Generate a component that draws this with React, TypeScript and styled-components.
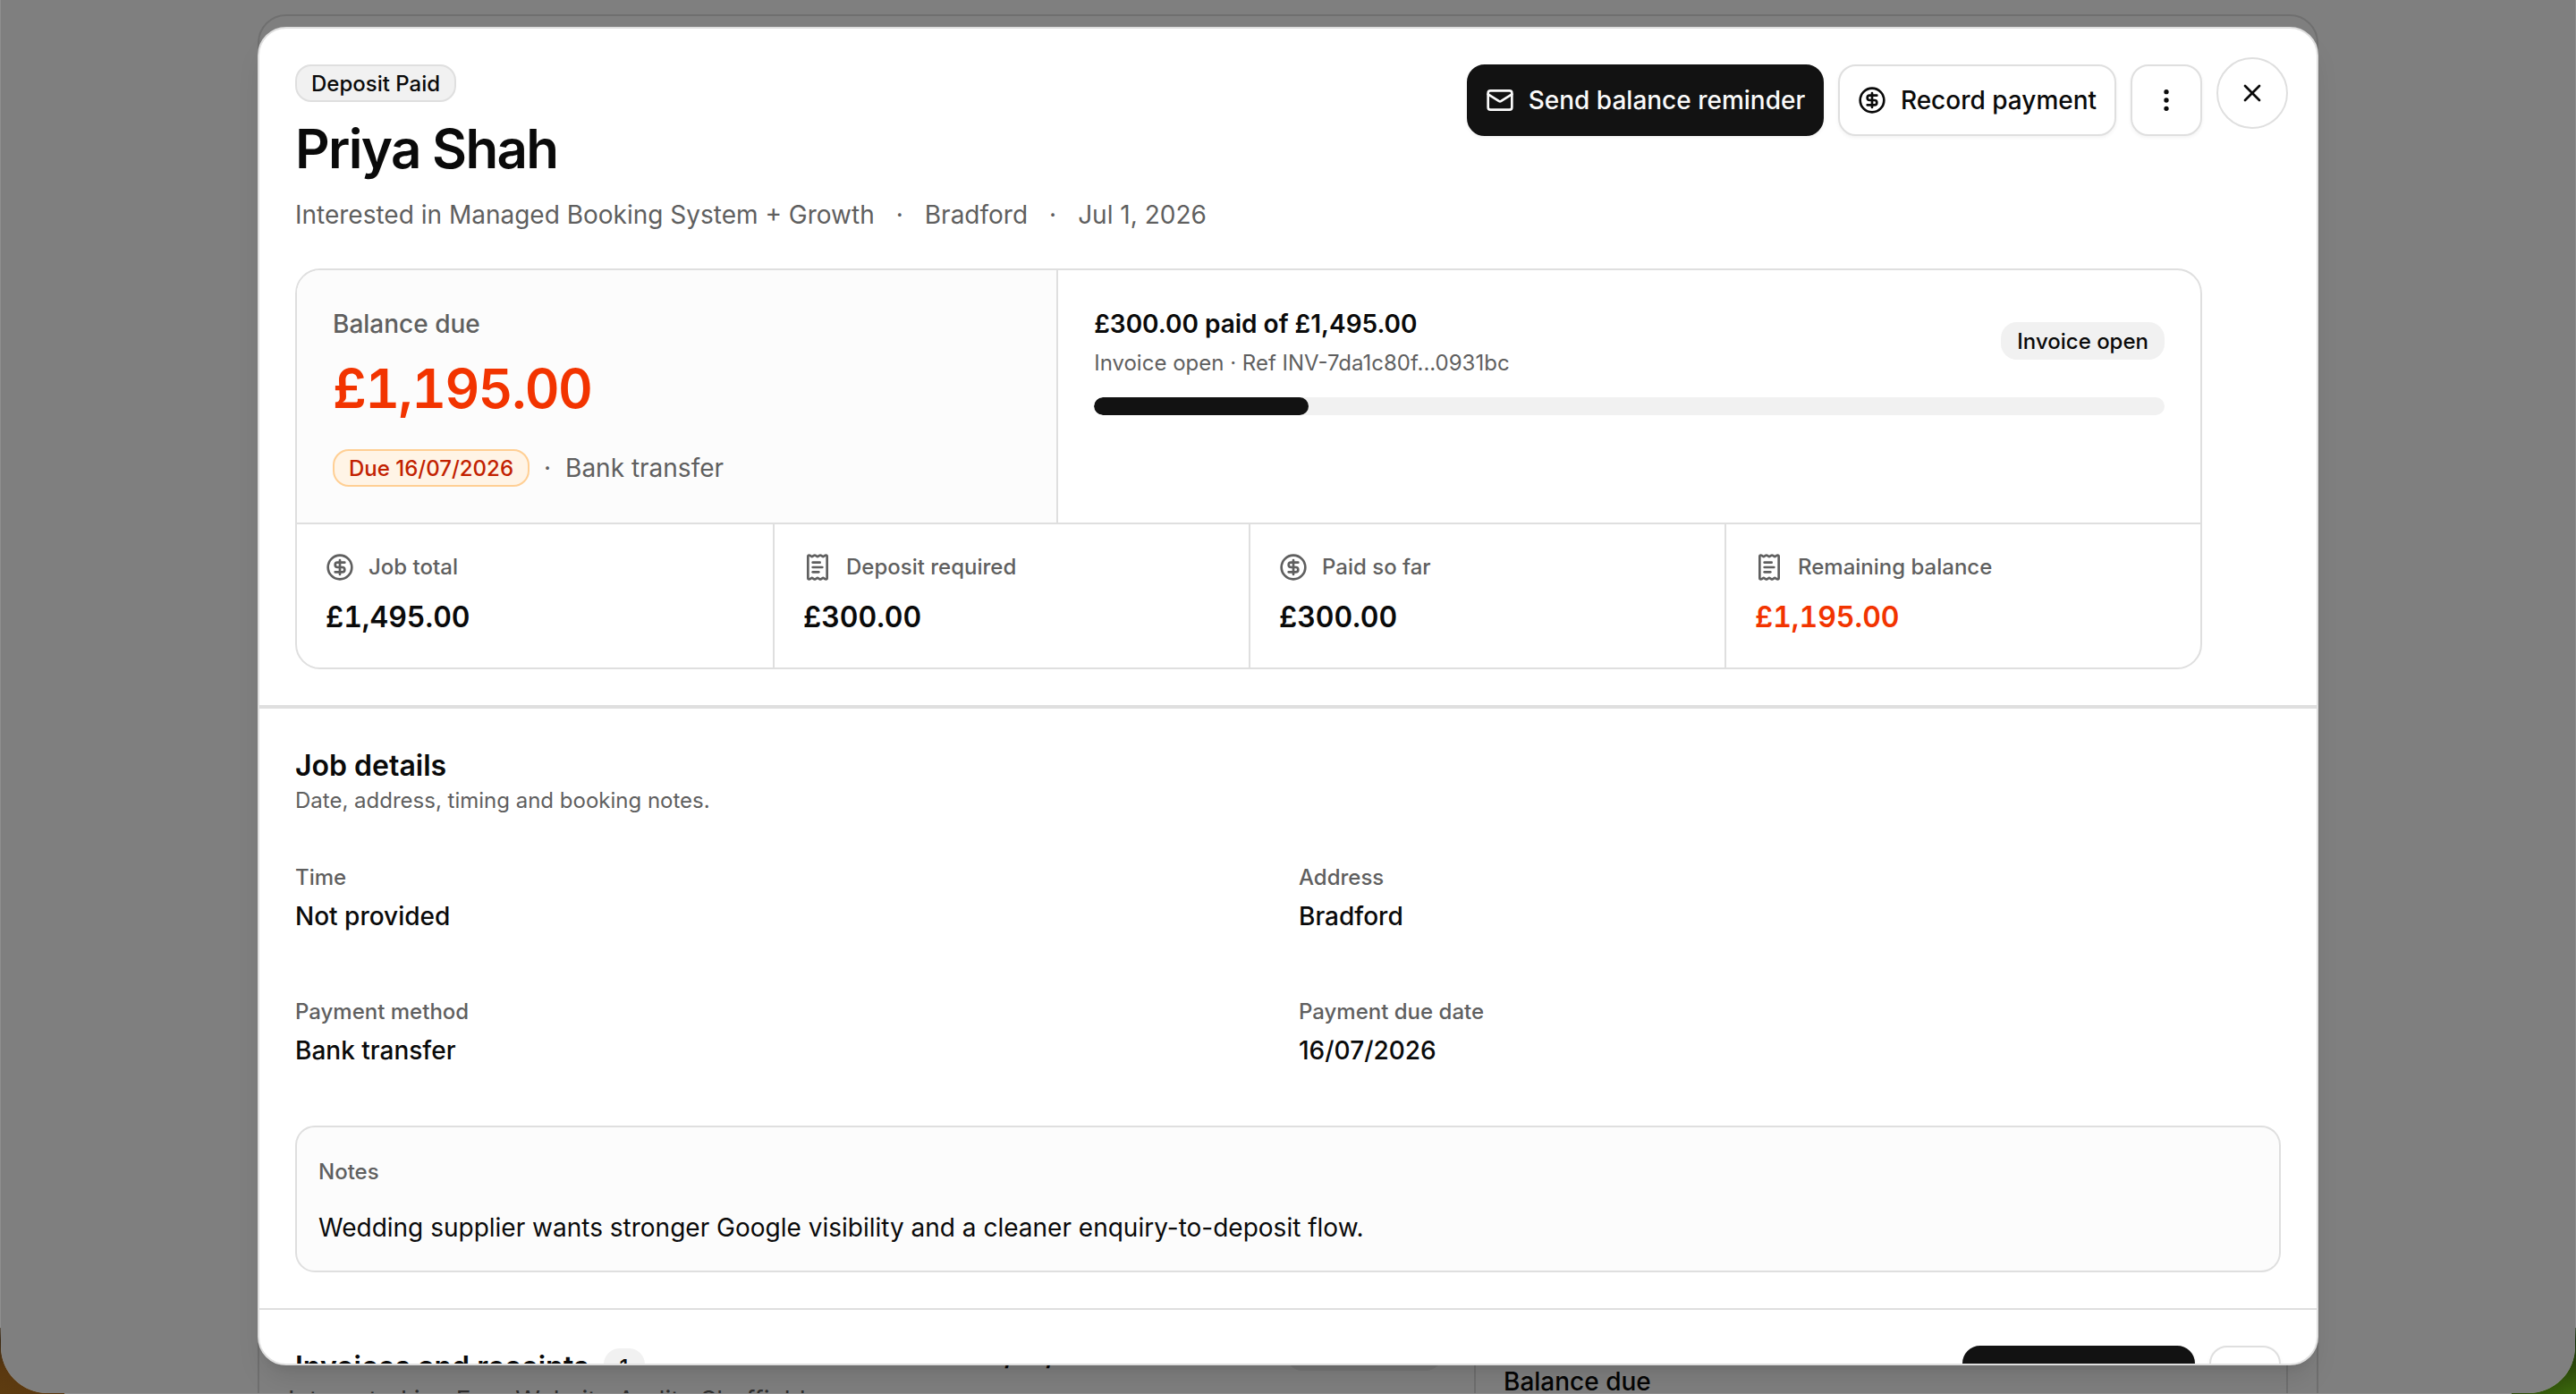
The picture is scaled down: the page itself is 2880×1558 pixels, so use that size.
import React from "react";
import styled, { createGlobalStyle } from "styled-components";
import { CircleDollarSign, EllipsisVertical, Mail, ReceiptText, X } from "lucide-react";

const line = "#dfdfdf";
const ink = "#0a0a0a";
const muted = "#5f5f5f";
const danger = "#f23400";

const GlobalStyle = createGlobalStyle`
  *, *::before, *::after { box-sizing: border-box; }
  html, body { margin: 0; padding: 0; overflow: hidden; }
  body {
    font-family: Inter, "Liberation Sans", sans-serif;
    color: ${ink};
    background: #808080;
  }
  p, h1, h2, h3 { margin: 0; font-weight: inherit; }
  button { font: inherit; color: inherit; margin: 0; }
`;

const Desktop = styled.div`
  position: relative;
  width: 2880px;
  height: 1558px;
  overflow: hidden;
  background:
    linear-gradient(20deg, #5e3c10 0, #5a3810 30%, #3c2a14 60%, #8e8e8e 90%) 0 100% / 72px 74px no-repeat,
    linear-gradient(-20deg, #3c6a0c 0, #2c4a0a 30%, #14300a 60%, #8e8e8e 90%) 100% 100% / 72px 74px no-repeat,
    #8e8e8e;
`;

const Window = styled.div`
  position: relative;
  width: 2878px;
  height: 1557px;
  margin: 0 1px;
  padding: 16px 287px 0;
  overflow: hidden;
  background: #fff;
  border-radius: 0 0 52px 52px;
`;

const PageCard = styled.div`
  display: flex;
  align-items: flex-end;
  height: 1700px;
  border: 2px solid ${line};
  border-radius: 32px;
  padding: 0 32px;
`;

const PageRow = styled.div`
  display: flex;
  align-items: flex-start;
  width: 100%;
  height: 218px;
`;

const PageMain = styled.div`
  width: 932px;
  flex: none;
`;

const PageTitle = styled.p`
  font-size: 29px;
  line-height: 40px;
  font-weight: 600;
  text-align: right;
`;

const PageMeta = styled.p`
  margin-top: 9px;
  font-size: 28px;
  line-height: 40px;
  color: ${muted};
`;

const PageTag = styled.div`
  width: 174px;
  height: 42px;
  flex: none;
  margin: -6px 0 0 184px;
  border-radius: 18px;
  background: #ececec;
`;

const PageSide = styled.div`
  width: 910px;
  height: 240px;
  flex: none;
  margin-left: 36px;
  padding: 28px 0 0 31px;
  border: solid ${line};
  border-width: 0 2px;
  font-size: 28px;
  line-height: 40px;
  font-weight: 500;
`;

const Scrim = styled.div`
  position: absolute;
  inset: 0;
  padding: 30px 287px 0;
  background: rgba(0, 0, 0, 0.5);
`;

const Dialog = styled.div`
  position: relative;
  width: 2304px;
  height: 1496px;
  overflow: hidden;
  background: #fff;
  border: 2px solid ${line};
  border-radius: 32px;
  box-shadow: 0 20px 30px -6px rgba(0, 0, 0, 0.1), 0 8px 12px -8px rgba(0, 0, 0, 0.1);
`;

const Header = styled.header`
  padding: 40px 128px 40px 40px;
  border-bottom: 2px solid ${line};
`;

const HeaderTop = styled.div`
  display: flex;
  justify-content: space-between;
  align-items: flex-start;
  height: 188px;
`;

const Badge = styled.span<{ $tone?: "outline" | "plain" | "warning" }>`
  display: inline-flex;
  align-items: center;
  justify-content: center;
  height: 42px;
  padding: 1px 16px 0;
  border-radius: 18px;
  border: 2px solid
    ${({ $tone }) => ($tone === "warning" ? "#ffcf94" : $tone === "outline" ? line : "transparent")};
  background: ${({ $tone }) => ($tone === "warning" ? "#fff4e6" : "#f1f1f1")};
  color: ${({ $tone }) => ($tone === "warning" ? "#c22100" : ink)};
  font-size: 24px;
  line-height: 30px;
  font-weight: 500;
  white-space: nowrap;
`;

const Name = styled.h1`
  margin-top: 16px;
  font-size: 60px;
  line-height: 72px;
  font-weight: 600;
  letter-spacing: -0.028em;
`;

const Identity = styled.div`
  display: flex;
  flex-direction: column;
  align-items: flex-start;
`;

const InlineRow = styled.div<{ $gap: number; $top: number; $height: number }>`
  display: flex;
  align-items: center;
  gap: ${({ $gap }) => $gap}px;
  height: ${({ $height }) => $height}px;
  margin-top: ${({ $top }) => $top}px;
  font-size: 28px;
  line-height: 40px;
  color: ${muted};
  white-space: nowrap;
`;

const Actions = styled.div`
  display: flex;
  gap: 16px;
`;

const Button = styled.button<{ $primary?: boolean; $square?: boolean; $width?: number }>`
  display: inline-flex;
  align-items: center;
  justify-content: center;
  gap: 16px;
  width: ${({ $width, $square }) => ($square ? "80px" : $width ? `${$width}px` : "auto")};
  height: 80px;
  flex: none;
  padding: 0;
  border: 2px solid ${({ $primary }) => ($primary ? "#121212" : line)};
  border-radius: 20px;
  background: ${({ $primary }) => ($primary ? "#121212" : "#fff")};
  color: ${({ $primary }) => ($primary ? "#fafafa" : ink)};
  font-size: 28px;
  line-height: 40px;
  font-weight: 500;
  white-space: nowrap;
  box-shadow: 0 2px 4px rgba(0, 0, 0, 0.05);
`;

const CloseButton = styled.button`
  position: absolute;
  top: 32px;
  right: 32px;
  display: flex;
  align-items: center;
  justify-content: center;
  width: 80px;
  height: 80px;
  padding: 0;
  border: 2px solid ${line};
  border-radius: 50%;
  background: #fff;
`;

const Summary = styled.section`
  margin-top: 40px;
  height: 448px;
  border: 2px solid ${line};
  border-radius: 28px;
  overflow: hidden;
`;

const SummaryTop = styled.div`
  display: grid;
  grid-template-columns: 2fr 3fr;
  height: 284px;
  border-bottom: 2px solid ${line};
`;

const BalanceCell = styled.div`
  padding: 40px;
  background: #fcfcfc;
  border-right: 2px solid ${line};
`;

const ProgressCell = styled.div`
  padding: 40px;
`;

const BalanceLabel = styled.p`
  font-size: 28px;
  line-height: 40px;
  font-weight: 500;
  color: ${muted};
`;

const BalanceAmount = styled.p`
  margin-top: 16px;
  font-size: 60px;
  line-height: 72px;
  font-weight: 600;
  font-variant-numeric: tabular-nums;
  letter-spacing: -0.025em;
  color: ${danger};
`;

const ProgressHead = styled.div`
  display: flex;
  justify-content: space-between;
  align-items: center;
  height: 78px;
`;

const ProgressText = styled.div`
  align-self: flex-start;
`;

const ProgressTitle = styled.p`
  font-size: 28px;
  line-height: 40px;
  font-weight: 600;
`;

const SmallText = styled.p<{ $top?: number }>`
  margin-top: ${({ $top = 0 }) => $top}px;
  font-size: 24px;
  line-height: 30px;
  color: ${muted};
`;

const Track = styled.div`
  height: 20px;
  margin-top: 24px;
  border-radius: 10px;
  background: #f1f1f1;
  overflow: hidden;
`;

const Fill = styled.div`
  height: 100%;
  border-radius: 10px;
  background: #121212;
`;

const Stats = styled.div`
  display: grid;
  grid-template-columns: repeat(4, 532px);
  height: 160px;
`;

const Stat = styled.div`
  padding: 32px;
  & + & {
    border-left: 2px solid ${line};
  }
`;

const StatLabel = styled.div`
  display: flex;
  align-items: center;
  gap: 16px;
  height: 32px;
  font-size: 24px;
  line-height: 30px;
  font-weight: 500;
  color: ${muted};
`;

const StatValue = styled.p<{ $danger?: boolean }>`
  margin-top: 16px;
  font-size: 32px;
  line-height: 48px;
  font-weight: 600;
  font-variant-numeric: tabular-nums;
  color: ${({ $danger }) => ($danger ? danger : ink)};
`;

const Section = styled.section`
  padding: 40px;
  border-top: 2px solid ${line};
`;

const SectionTitle = styled.h2`
  font-size: 32px;
  line-height: 48px;
  font-weight: 600;
`;

const Fields = styled.div`
  display: grid;
  grid-template-columns: 1fr 1fr;
  gap: 24px;
  margin-top: 32px;
`;

const Field = styled.div`
  height: 126px;
  padding: 24px 0;
`;

const FieldLabel = styled.p`
  font-size: 24px;
  line-height: 30px;
  font-weight: 500;
  color: ${muted};
`;

const FieldValue = styled.p`
  margin-top: 8px;
  font-size: 28px;
  line-height: 40px;
  font-weight: 500;
`;

const Notes = styled.div`
  height: 164px;
  margin-top: 40px;
  padding: 24px;
  border: 2px solid ${line};
  border-radius: 22px;
  background: #fcfcfc;
`;

const NotesLabel = styled.p`
  font-size: 24px;
  line-height: 52px;
  font-weight: 500;
  color: ${muted};
`;

const NotesBody = styled.p`
  margin-top: 12px;
  font-size: 28px;
  line-height: 48px;
`;

const InvoiceRow = styled.div`
  display: flex;
  justify-content: space-between;
  align-items: flex-start;
`;

const InvoiceHeading = styled.div`
  display: flex;
  align-items: center;
  gap: 16px;
`;

const stats = [
  { label: "Job total", value: "£1,495.00", icon: CircleDollarSign },
  { label: "Deposit required", value: "£300.00", icon: ReceiptText },
  { label: "Paid so far", value: "£300.00", icon: CircleDollarSign },
  { label: "Remaining balance", value: "£1,195.00", icon: ReceiptText, due: true },
];

const fields = [
  ["Time", "Not provided"],
  ["Address", "Bradford"],
  ["Payment method", "Bank transfer"],
  ["Payment due date", "16/07/2026"],
];

const paidShare = 300 / 1495;

export default function App() {
  return (
    <Desktop>
      <GlobalStyle />
      <Window>
        <PageCard>
          <PageRow>
            <PageMain>
              <PageTitle>Balance due 16/07/2026</PageTitle>
              <PageMeta>Interested in · Free Website Audit · Sheffield</PageMeta>
            </PageMain>
            <PageTag />
            <PageSide>Balance due</PageSide>
          </PageRow>
        </PageCard>
        <Scrim>
          <Dialog role="dialog">
            <Header>
              <HeaderTop>
                <Identity>
                  <Badge $tone="outline">Deposit Paid</Badge>
                  <Name>Priya Shah</Name>
                  <InlineRow $gap={24} $top={18} $height={40}>
                    <span>Interested in Managed Booking System + Growth</span>
                    <span>·</span>
                    <span>Bradford</span>
                    <span>·</span>
                    <span>Jul 1, 2026</span>
                  </InlineRow>
                </Identity>
                <Actions>
                  <Button $primary $width={399}>
                    <Mail size={32} />
                    Send balance reminder
                  </Button>
                  <Button $width={311}>
                    <CircleDollarSign size={32} />
                    Record payment
                  </Button>
                  <Button $square aria-label="More">
                    <EllipsisVertical size={32} />
                  </Button>
                </Actions>
              </HeaderTop>
              <Summary>
                <SummaryTop>
                  <BalanceCell>
                    <BalanceLabel>Balance due</BalanceLabel>
                    <BalanceAmount>£1,195.00</BalanceAmount>
                    <InlineRow $gap={16} $top={32} $height={42}>
                      <Badge $tone="warning">Due 16/07/2026</Badge>
                      <span>·</span>
                      <span>Bank transfer</span>
                    </InlineRow>
                  </BalanceCell>
                  <ProgressCell>
                    <ProgressHead>
                      <ProgressText>
                        <ProgressTitle>£300.00 paid of £1,495.00</ProgressTitle>
                        <SmallText $top={9}>Invoice open · Ref INV-7da1c80f...0931bc</SmallText>
                      </ProgressText>
                      <Badge $tone="plain">Invoice open</Badge>
                    </ProgressHead>
                    <Track>
                      <Fill style={{ width: `${paidShare * 100}%` }} />
                    </Track>
                  </ProgressCell>
                </SummaryTop>
                <Stats>
                  {stats.map(({ label, value, icon: Icon, due }) => (
                    <Stat key={label}>
                      <StatLabel>
                        <Icon size={32} />
                        {label}
                      </StatLabel>
                      <StatValue $danger={due}>{value}</StatValue>
                    </Stat>
                  ))}
                </Stats>
              </Summary>
            </Header>
            <Section>
              <SectionTitle>Job details</SectionTitle>
              <SmallText>Date, address, timing and booking notes.</SmallText>
              <Fields>
                {fields.map(([label, value]) => (
                  <Field key={label}>
                    <FieldLabel>{label}</FieldLabel>
                    <FieldValue>{value}</FieldValue>
                  </Field>
                ))}
              </Fields>
              <Notes>
                <NotesLabel>Notes</NotesLabel>
                <NotesBody>
                  Wedding supplier wants stronger Google visibility and a cleaner enquiry-to-deposit flow.
                </NotesBody>
              </Notes>
            </Section>
            <Section>
              <InvoiceRow>
                <InvoiceHeading>
                  <SectionTitle>Invoices and receipts</SectionTitle>
                  <Badge $tone="plain">1</Badge>
                </InvoiceHeading>
                <Actions>
                  <Button $primary $width={260} />
                  <Button $square />
                </Actions>
              </InvoiceRow>
            </Section>
            <CloseButton aria-label="Close">
              <X size={32} />
            </CloseButton>
          </Dialog>
        </Scrim>
      </Window>
    </Desktop>
  );
}
